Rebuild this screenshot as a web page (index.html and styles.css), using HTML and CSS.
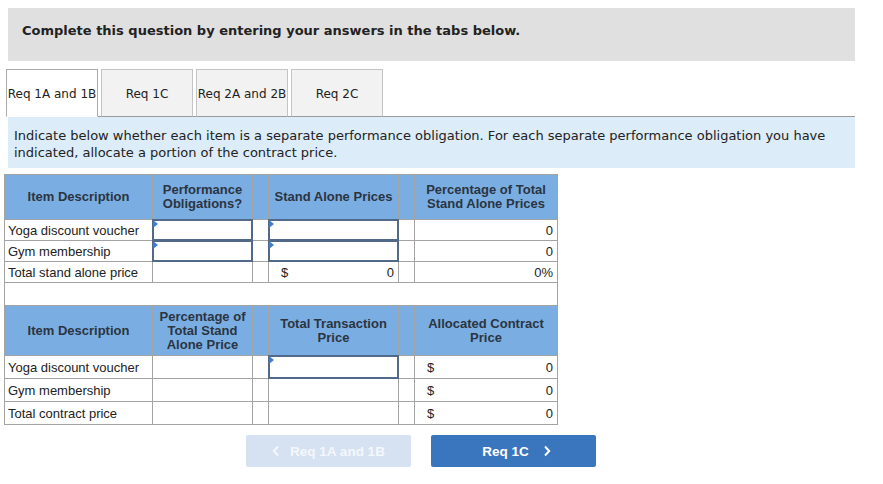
FILE: index.html
```html
<!DOCTYPE html>
<html lang="en">
  <head>
    <meta charset="UTF-8" />
    <meta name="viewport" content="width=device-width, initial-scale=1.0" />
    <title>Req 1A and 1B</title>
    <link rel="stylesheet" href="styles.css">
  </head>
  <body>
    <div class="page">
      <div class="title-bar">Complete this question by entering your answers in the tabs below.</div>

      <div class="tabs">
        <div class="tab active">Req 1A and 1B</div>
        <div class="tab">Req 1C</div>
        <div class="tab">Req 2A and 2B</div>
        <div class="tab">Req 2C</div>
      </div>

      <div class="info">
        Indicate below whether each item is a separate performance obligation. For each separate performance obligation you have<br>
        indicated, allocate a portion of the contract price.
      </div>

      <table class="grid">
        <colgroup>
          <col style="width: 148px">
          <col style="width: 100px">
          <col style="width: 16px">
          <col style="width: 130px">
          <col style="width: 16px">
          <col style="width: 143px">
        </colgroup>
        <tr class="head head-1">
          <th>Item Description</th>
          <th>Performance<br>Obligations?</th>
          <th></th>
          <th>Stand Alone Prices</th>
          <th></th>
          <th>Percentage of Total<br>Stand Alone Prices</th>
        </tr>
        <tr class="row-1">
          <td>Yoga discount voucher</td>
          <td class="input"><div class="field"></div></td>
          <td></td>
          <td class="input"><div class="field"></div></td>
          <td></td>
          <td class="num">0</td>
        </tr>
        <tr class="row-1">
          <td>Gym membership</td>
          <td class="input"><div class="field"></div></td>
          <td></td>
          <td class="input"><div class="field"></div></td>
          <td></td>
          <td class="num">0</td>
        </tr>
        <tr class="row-1">
          <td>Total stand alone price</td>
          <td></td>
          <td></td>
          <td class="money"><span class="dollar">$</span><span>0</span></td>
          <td></td>
          <td class="num">0%</td>
        </tr>
        <tr class="spacer">
          <td colspan="6"></td>
        </tr>
        <tr class="head head-2">
          <th>Item Description</th>
          <th>Percentage of<br>Total Stand<br>Alone Price</th>
          <th></th>
          <th>Total Transaction<br>Price</th>
          <th></th>
          <th>Allocated Contract<br>Price</th>
        </tr>
        <tr class="row-2">
          <td>Yoga discount voucher</td>
          <td></td>
          <td></td>
          <td class="input"><div class="field"></div></td>
          <td></td>
          <td class="money"><span class="dollar">$</span><span>0</span></td>
        </tr>
        <tr class="row-2">
          <td>Gym membership</td>
          <td></td>
          <td></td>
          <td></td>
          <td></td>
          <td class="money"><span class="dollar">$</span><span>0</span></td>
        </tr>
        <tr class="row-2">
          <td>Total contract price</td>
          <td></td>
          <td></td>
          <td></td>
          <td></td>
          <td class="money"><span class="dollar">$</span><span>0</span></td>
        </tr>
      </table>

      <div class="nav">
        <button class="btn btn-prev" disabled>
          <svg width="8" height="12" viewBox="0 0 8 12"><polyline points="6,1.5 1.8,6 6,10.5" fill="none" stroke="currentColor" stroke-width="2"/></svg>
          <span>Req 1A and 1B</span>
        </button>
        <button class="btn btn-next">
          <span>Req 1C</span>
          <svg width="8" height="12" viewBox="0 0 8 12"><polyline points="2,1.5 6.2,6 2,10.5" fill="none" stroke="currentColor" stroke-width="2"/></svg>
        </button>
      </div>
    </div>
  </body>
</html>
```

FILE: styles.css
```css
body {
  margin: 0;
  background: #fff;
  color: #222;
}

.page {
  padding: 8px 28px 0 8px;
}

.title-bar {
  height: 38px;
  padding: 15px 0 0 14px;
  background: #e0e0e0;
  font-family: 'DejaVu Sans', Verdana, sans-serif;
  font-size: 13px;
  font-weight: bold;
  line-height: 16px;
  color: #222;
}

.tabs {
  display: flex;
  gap: 3px;
  margin: 8px 0 0 -2px;
  border-bottom: 1px solid #9a9a9a;
}

.tab {
  width: 90px;
  height: 46px;
  margin-bottom: -1px;
  border: 1px solid #c4c4c4;
  border-bottom: 1px solid #9a9a9a;
  background: #f2f2f2;
  font-family: 'DejaVu Sans', Verdana, sans-serif;
  font-size: 12px;
  line-height: 48px;
  text-align: center;
  white-space: nowrap;
  color: #222;
}

.tab.active {
  background: #fff;
  border-color: #aaa;
  border-bottom-color: #fff;
}

.info {
  height: 41px;
  padding: 10px 0 0 6px;
  background: #dcecf9;
  font-family: 'DejaVu Sans', Verdana, sans-serif;
  font-size: 13px;
  line-height: 17px;
  color: #222;
  white-space: nowrap;
}

.grid {
  margin: 6px 0 0 -4px;
  width: 553px;
  table-layout: fixed;
  border-collapse: collapse;
  font-family: 'Liberation Sans', Arial, sans-serif;
  font-size: 13px;
  color: #222;
}

.grid th,
.grid td {
  border: 1px solid #a3a3a3;
  padding: 0 3px;
  white-space: nowrap;
}

.grid th {
  background: #7aaee3;
  font-weight: bold;
  color: #2b3440;
  line-height: 14px;
  text-align: center;
}

.head-1 th {
  height: 44px;
}

.head-2 th {
  height: 48px;
  padding-top: 1px;
}

.row-1 td {
  height: 20px;
}

.row-2 td {
  height: 22px;
}

.spacer td {
  height: 22px;
}

.grid td.num {
  text-align: right;
  padding-right: 4px;
}

.grid td.money {
  padding: 0 4px 0 12px;
}

.money span:last-child {
  float: right;
}

.grid td.input {
  padding: 0;
}

.field {
  position: relative;
  margin: -1px;
  border: 2px solid #52698a;
  background: #fff;
  box-sizing: border-box;
}

.row-1 .field {
  height: 22px;
}

.row-2 .field {
  height: 24px;
}

.field::before {
  content: '';
  position: absolute;
  top: -1px;
  left: -1px;
  border-top: 4px solid transparent;
  border-bottom: 4px solid transparent;
  border-left: 5px solid #3b7fd4;
}

.nav {
  display: flex;
  gap: 20px;
  margin: 10px 0 0 238px;
}

.btn {
  display: flex;
  align-items: center;
  justify-content: center;
  gap: 10px;
  width: 165px;
  height: 32px;
  border: none;
  border-radius: 2px;
  font-family: 'Liberation Sans', Arial, sans-serif;
  font-size: 13.5px;
  font-weight: bold;
  padding: 0;
}

.btn-prev {
  background: #d6e2f1;
  color: #f4f7fb;
}

.btn-next {
  background: #3a76be;
  color: #fff;
  gap: 14px;
  padding-left: 6px;
}
```
